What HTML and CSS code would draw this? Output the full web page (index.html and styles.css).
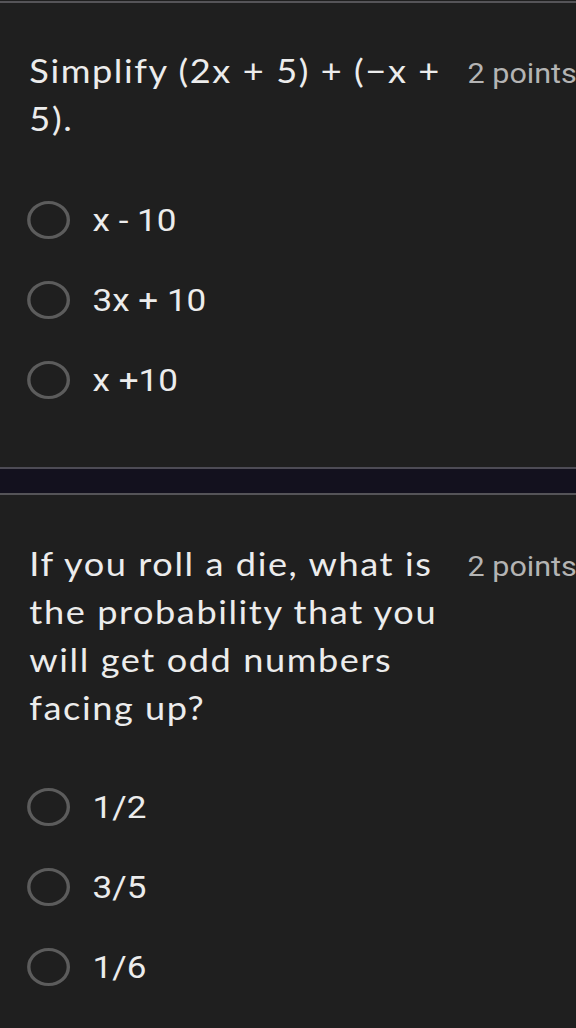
FILE: index.html
```html
<!DOCTYPE html>
<html>
<head>
<meta charset="utf-8">
<link rel="stylesheet" href="styles.css">
</head>
<body>
<div class="page">
  <section class="card card-first">
    <div class="q-head">
      <div class="q-title">Simplify (2x + 5) + (−x + 5).</div>
      <div class="q-points">2 points</div>
    </div>
    <div class="options">
      <label class="option"><span class="radio"></span><span class="opt-text">x - 10</span></label>
      <label class="option"><span class="radio"></span><span class="opt-text">3x + 10</span></label>
      <label class="option"><span class="radio"></span><span class="opt-text">x +10</span></label>
    </div>
  </section>
  <div class="separator"></div>
  <section class="card card-second">
    <div class="q-head">
      <div class="q-title">If you roll a die, what is the probability that you will get odd numbers facing up?</div>
      <div class="q-points">2 points</div>
    </div>
    <div class="options options-second">
      <label class="option"><span class="radio"></span><span class="opt-text">1/2</span></label>
      <label class="option"><span class="radio"></span><span class="opt-text">3/5</span></label>
      <label class="option"><span class="radio"></span><span class="opt-text">1/6</span></label>
    </div>
  </section>
</div>
</body>
</html>
```
FILE: styles.css
```css
html, body {
  margin: 0;
  padding: 0;
  background: #1f1f1f;
  overflow: hidden;
}
.page {
  display: flex;
  flex-direction: column;
  width: 510px;
  min-height: 1028px;
  background: #1f1f1f;
  transform: scaleX(1.1294);
  transform-origin: 0 0;
}
.card {
  border-top: 2px solid #555458;
  padding: 0 0 0 26px;
}
.card-first {
  margin-top: 1px;
  padding-top: 44px;
  padding-bottom: 47px;
}
.card-second {
  padding-top: 45px;
}
.separator {
  height: 24px;
  background: #13111e;
  border-top: 2px solid #4d4b55;
}
.q-head {
  display: flex;
  align-items: baseline;
}
.q-title {
  width: 388px;
  flex: none;
  font-family: Lato, "Open Sans", sans-serif;
  font-size: 32px;
  line-height: 48px;
  letter-spacing: 1.4px;
  color: #ececec;
}
.q-points {
  flex: none;
  margin-left: auto;
  font-family: Roboto, "Noto Sans", sans-serif;
  font-size: 27px;
  color: #b4b4b4;
  white-space: nowrap;
}
.options {
  display: flex;
  flex-direction: column;
  margin-top: 37px;
}
.options-second {
  margin-top: 35px;
}
.option {
  display: flex;
  align-items: center;
  height: 80px;
}
.radio {
  width: 32px;
  height: 32px;
  border: 3px solid #5c5c5c;
  border-radius: 50%;
  flex: none;
  margin-left: -2px;
}
.opt-text {
  margin-left: 20px;
  font-family: Roboto, "Noto Sans", sans-serif;
  font-size: 31px;
  color: #ececec;
}
```
